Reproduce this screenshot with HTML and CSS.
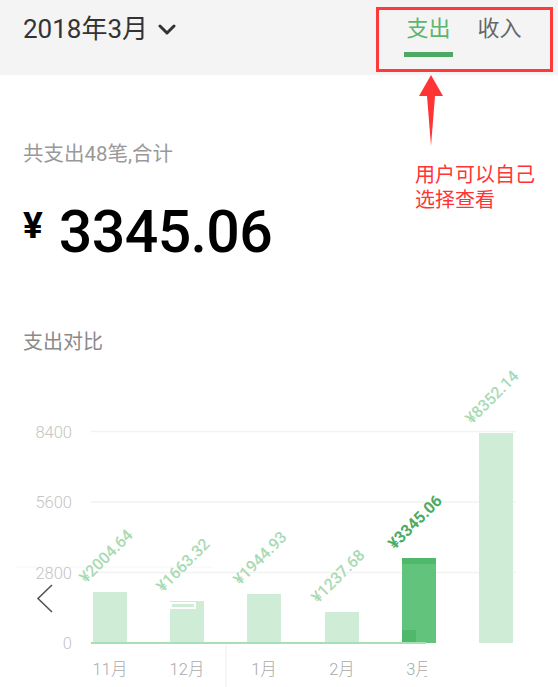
FILE: index.html
```html
<!DOCTYPE html>
<html lang="zh-CN">
<head>
<meta charset="utf-8">
<title>支出</title>
<link rel="stylesheet" href="styles.css">
</head>
<body>
<header class="topbar">
  <div class="month">
    <span class="month-text">2018年3月</span>
    <svg class="chev" width="18" height="12" viewBox="0 0 18 12"><polyline points="2,2 9,9 16,2" fill="none" stroke="#333" stroke-width="3" stroke-linecap="round" stroke-linejoin="round"/></svg>
  </div>
  <nav class="tabs">
    <div class="tab active"><span>支出</span><i class="bar"></i></div>
    <div class="tab"><span>收入</span><i class="bar"></i></div>
  </nav>
</header>

<section class="summary">
  <div class="count">共支出48笔,合计</div>
  <div class="amount"><span class="yen">¥</span><span class="num">3345.06</span></div>
  <div class="section-title">支出对比</div>
</section>

<svg class="chart" width="558" height="331" viewBox="0 356 558 331">
  <defs>
    <clipPath id="cut"><rect x="0" y="650" width="427" height="40"/></clipPath>
  </defs>
  <g class="grid">
    <line x1="91" y1="431.5" x2="516" y2="431.5"/>
    <line x1="91" y1="502" x2="516" y2="502"/>
    <line x1="91" y1="572.5" x2="516" y2="572.5"/>
    <line x1="15" y1="567" x2="213" y2="567" class="faint"/>
  </g>
  <g class="ylab">
    <text x="72" y="437.5">8400</text>
    <text x="72" y="508">5600</text>
    <text x="72" y="578.5">2800</text>
    <text x="72" y="649">0</text>
  </g>
  <g class="bars">
    <rect class="b-light" x="93" y="592" width="34" height="51"/>
    <rect class="b-light" x="170" y="601" width="34" height="42"/>
    <rect x="171" y="603" width="24" height="5" fill="none" stroke="#fff" stroke-width="2"/>
    <rect class="b-light" x="247" y="594" width="34" height="49"/>
    <rect class="b-light" x="325" y="612" width="34" height="31"/>
    <rect class="b-dark" x="402" y="558" width="34" height="85"/>
    <rect class="b-darker" x="402" y="558" width="34" height="6"/>
    <rect class="b-darker" x="402" y="630" width="14" height="13"/>
    <rect class="b-light" x="479" y="433" width="34" height="210"/>
  </g>
  <line class="axis" x1="91" y1="643" x2="426" y2="643"/>
  <line class="sep" x1="226" y1="645" x2="226" y2="687"/>
  <g class="vlab">
    <text transform="translate(106 556) rotate(-45)">¥2004.64</text>
    <text transform="translate(183 565) rotate(-45)">¥1663.32</text>
    <text transform="translate(260 558) rotate(-45)">¥1944.93</text>
    <text transform="translate(338 576) rotate(-45)">¥1237.68</text>
    <text class="cur" transform="translate(415 522) rotate(-45)">¥3345.06</text>
    <text transform="translate(492 397) rotate(-45)">¥8352.14</text>
  </g>
  <g class="xlab">
    <text x="110" y="675">11月</text>
    <text x="187" y="675">12月</text>
    <text x="264" y="675">1月</text>
    <text x="342" y="675">2月</text>
    <text x="419" y="675" clip-path="url(#cut)">3月</text>
  </g>
  <polyline class="prev" points="52,585 38,598.5 52,612"/>
</svg>

<div class="annot">
  <div class="annot-box"></div>
  <svg class="annot-arrow" width="30" height="75" viewBox="416 74 30 75"><polygon points="431,75 443,96 435,96 431,146 427,96 419,96" fill="#ff3535"/></svg>
  <div class="annot-text"><div>用户可以自己</div><div>选择查看</div></div>
</div>
</body>
</html>
```

FILE: styles.css
```css
html, body {
  margin: 0;
  padding: 0;
  background: #fff;
}
body {
  position: relative;
  width: 558px;
  height: 687px;
  overflow: hidden;
  font-family: Roboto, "Noto Sans CJK SC", sans-serif;
}
.topbar {
  height: 75px;
  background: #f4f4f4;
  display: flex;
  justify-content: space-between;
  align-items: flex-start;
  box-sizing: border-box;
  padding: 0 34px 0 23px;
}
.month {
  display: flex;
  align-items: center;
  margin-top: 14px;
  height: 30px;
}
.month-text {
  font-size: 26px;
  line-height: 30px;
  color: #333;
}
.chev {
  margin-left: 10px;
  margin-top: 1px;
}
.tabs {
  display: flex;
  gap: 22px;
  margin-top: 11px;
}
.tab {
  width: 49px;
  display: flex;
  flex-direction: column;
  align-items: center;
}
.tab span {
  font-size: 22px;
  line-height: 30px;
  color: #666;
  font-family: "Noto Sans CJK SC", sans-serif;
}
.tab .bar {
  display: block;
  width: 49px;
  height: 5px;
  margin-top: 11px;
  background: transparent;
}
.tab.active span { color: #5bb56e; }
.tab.active .bar { background: #4da963; }

.summary {
  padding-left: 23px;
}
.count {
  margin-top: 65px;
  font-size: 20.5px;
  line-height: 28px;
  color: #999;
}
.amount {
  margin-top: 34px;
  display: flex;
  align-items: flex-start;
  height: 60px;
  color: #000;
}
.yen {
  font-size: 37px;
  font-weight: 700;
  line-height: 38px;
  margin-top: 5px;
  margin-right: 16px;
}
.num {
  font-size: 59px;
  font-weight: 500;
  line-height: 60px;
  letter-spacing: -0.6px;
}
.section-title {
  margin-top: 66px;
  font-size: 20px;
  line-height: 28px;
  color: #8a8a8a;
}

.chart {
  display: block;
}
.grid line {
  stroke: #f2f2f2;
  stroke-width: 1.5;
}
.grid line.faint {
  stroke: #f6f6f6;
  stroke-width: 1;
}
.ylab text {
  font-family: Roboto, sans-serif;
  font-weight: 300;
  font-size: 16.5px;
  fill: #c4c4c4;
  text-anchor: end;
}
.b-light { fill: #cfecd7; }
.b-dark { fill: #62c37c; }
.b-darker { fill: #50b86a; }
.axis {
  stroke: #a9dfb7;
  stroke-width: 2;
}
.sep {
  stroke: #eeeeee;
  stroke-width: 1;
}
.vlab text {
  font-family: Roboto, sans-serif;
  font-weight: 500;
  font-size: 16px;
  fill: #a8dab4;
  text-anchor: middle;
  dominant-baseline: central;
}
.vlab text.cur {
  fill: #4aab63;
  font-weight: 700;
}
.xlab text {
  font-family: Roboto, "Noto Sans CJK SC", sans-serif;
  font-weight: 300;
  font-size: 16.5px;
  fill: #aaaaaa;
  text-anchor: middle;
}
.prev {
  fill: none;
  stroke: #555;
  stroke-width: 1.6;
}

.annot {
  position: absolute;
  left: 0;
  top: 0;
  width: 0;
  height: 0;
}
.annot-box {
  position: absolute;
  left: 376px;
  top: 7px;
  width: 177px;
  height: 65px;
  box-sizing: border-box;
  border: 3px solid #ff3a3a;
}
.annot-arrow {
  position: absolute;
  left: 416px;
  top: 74px;
}
.annot-text {
  position: absolute;
  left: 415px;
  top: 161px;
  width: 140px;
  font-family: "Noto Sans CJK SC", sans-serif;
  font-size: 20px;
  line-height: 25px;
  color: #ff3535;
  white-space: nowrap;
}
```
